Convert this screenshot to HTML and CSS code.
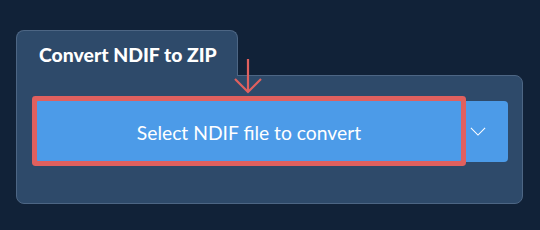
FILE: index.html
```html
<!DOCTYPE html>
<html lang="en">
<head>
    <meta charset="UTF-8">
    <title>Convert NDIF to ZIP</title>
    <link rel="stylesheet" href="styles.css">
</head>
<body>
    <div class="converter">
        <div class="tab">
            <h1>Convert NDIF to ZIP</h1>
        </div>
        <div class="panel">
            <div class="picker">
                <button class="select-btn">Select NDIF file to convert</button>
                <button class="more-btn" aria-label="More options">
                    <svg width="18" height="10" viewBox="0 0 18 10">
                        <path d="M1 1 L9 9 L17 1" fill="none" stroke="#fff" stroke-width="1.2"/>
                    </svg>
                </button>
            </div>
            <svg class="hint-arrow" width="30" height="36" viewBox="0 0 30 36">
                <path d="M15 0 V33 M2 20 L15 33 L28 20" fill="none" stroke="#e0605e" stroke-width="2.2"/>
            </svg>
        </div>
    </div>
</body>
</html>
```

FILE: styles.css
```css
body {
    margin: 0;
    background-color: #112238;
    font-family: Lato, "Open Sans", sans-serif;
}

.converter {
    padding: 30px 0 0 16px;
    width: 507px;
}

.tab {
    width: 222px;
    height: 46px;
    box-sizing: border-box;
    background-color: #2e4a6a;
    border: 1px solid #4d6684;
    border-bottom: none;
    border-radius: 8px 8px 0 0;
    padding: 13px 0 0 22px;
    position: relative;
    z-index: 1;
    margin-bottom: -1px;
}

.tab h1 {
    margin: 0;
    font-size: 19.4px;
    font-weight: 900;
    color: #fff;
    line-height: 22px;
}

.panel {
    position: relative;
    height: 129px;
    box-sizing: border-box;
    background-color: #2e4a6a;
    border: 1px solid #4d6684;
    border-radius: 0 8px 8px 8px;
    padding: 25px 14px 0 20px;
}

.picker {
    display: flex;
}

.select-btn {
    width: 424px;
    height: 60px;
    border: none;
    background-color: #4c9be8;
    color: #fff;
    font-family: Lato, "Open Sans", sans-serif;
    font-weight: normal;
    font-size: 19.3px;
    padding: 2px 0 0;
    box-shadow: 0 0 0 5px #e0605e;
    border-radius: 1px;
    position: relative;
    z-index: 1;
    cursor: pointer;
}

.more-btn {
    width: 47px;
    height: 61px;
    border: none;
    background-color: #4c9be8;
    border-radius: 0 4px 4px 0;
    display: flex;
    align-items: center;
    justify-content: center;
    padding: 0 14px 0 0;
    cursor: pointer;
}

.more-btn svg {
    width: 16px;
    height: 9px;
}

.hint-arrow {
    position: absolute;
    left: 216px;
    top: -17px;
    z-index: 2;
}
```
